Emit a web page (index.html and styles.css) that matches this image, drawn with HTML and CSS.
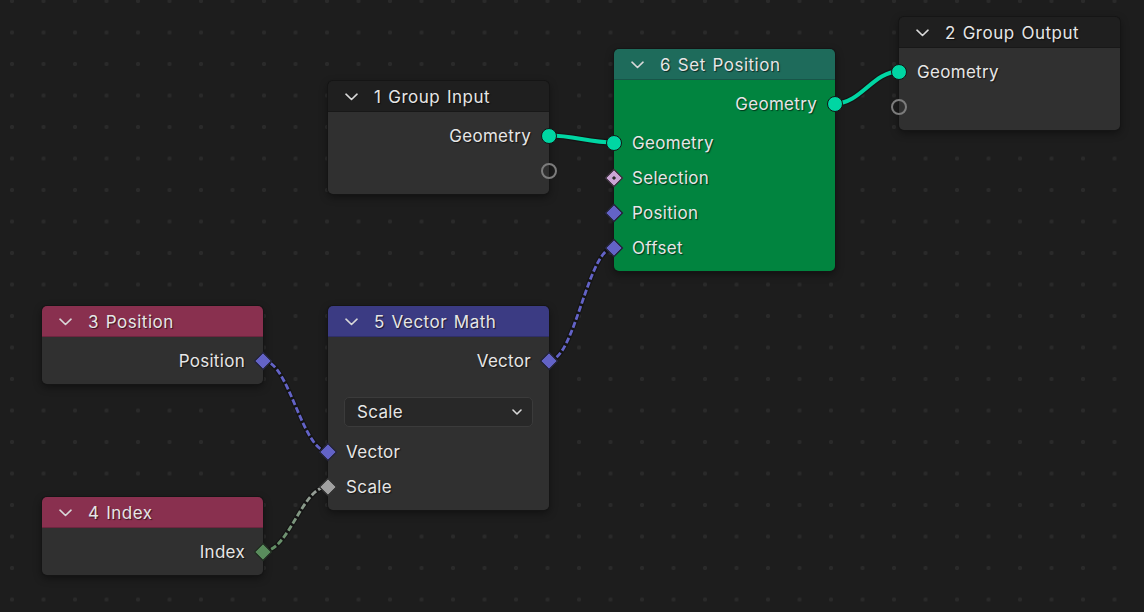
FILE: index.html
```html
<!DOCTYPE html>
<html lang="en">
<head>
    <meta charset="UTF-8">
    <title>Geometry Nodes</title>
    <link rel="stylesheet" href="styles.css">
</head>
<body>
    <div class="editor">
        <svg class="links" width="1144" height="612" viewBox="0 0 1144 612">
            <defs>
                <linearGradient id="intToFloat" gradientUnits="userSpaceOnUse" x1="263" y1="551.5" x2="328" y2="486.5">
                    <stop offset="0" stop-color="#5a8c5d"/>
                    <stop offset="1" stop-color="#a1a1a1"/>
                </linearGradient>
            </defs>
            <!-- geometry links -->
            <path class="link-outline" d="M549 135.5 C575 135.5 588 142.5 614 142.5"/>
            <path class="link-geo" d="M549 135.5 C575 135.5 588 142.5 614 142.5"/>
            <path class="link-outline" d="M835 103.5 C861 103.5 873 71.5 899 71.5"/>
            <path class="link-geo" d="M835 103.5 C861 103.5 873 71.5 899 71.5"/>
            <!-- field links -->
            <path class="link-outline thin" d="M549 360.5 C575 360.5 588 247.5 614 247.5"/>
            <path class="link-field vec" d="M549 360.5 C575 360.5 588 247.5 614 247.5"/>
            <path class="link-outline thin" d="M263 360.5 C289 360.5 302 451.5 328 451.5"/>
            <path class="link-field vec" d="M263 360.5 C289 360.5 302 451.5 328 451.5"/>
            <path class="link-outline thin" d="M263 551.5 C289 551.5 302 486.5 328 486.5"/>
            <path class="link-field grad" d="M263 551.5 C289 551.5 302 486.5 328 486.5"/>
        </svg>

        <div class="node group-input">
            <div class="node-header">
                <svg class="chevron" width="13" height="8" viewBox="0 0 13 8"><path d="M1 1.2 L6.5 6.5 L12 1.2"/></svg>
                <span>1 Group Input</span>
            </div>
            <div class="node-body">
                <div class="row out">Geometry<i class="socket geo"></i></div>
                <div class="row out"><i class="socket empty"></i></div>
            </div>
        </div>

        <div class="node set-position">
            <div class="node-header">
                <svg class="chevron" width="13" height="8" viewBox="0 0 13 8"><path d="M1 1.2 L6.5 6.5 L12 1.2"/></svg>
                <span>6 Set Position</span>
            </div>
            <div class="node-body">
                <div class="row out">Geometry<i class="socket geo"></i></div>
                <div class="inputs">
                    <div class="row in"><i class="socket geo"></i>Geometry</div>
                    <div class="row in"><i class="socket bool"></i>Selection</div>
                    <div class="row in"><i class="socket vec"></i>Position</div>
                    <div class="row in"><i class="socket vec"></i>Offset</div>
                </div>
            </div>
        </div>

        <div class="node group-output">
            <div class="node-header">
                <svg class="chevron" width="13" height="8" viewBox="0 0 13 8"><path d="M1 1.2 L6.5 6.5 L12 1.2"/></svg>
                <span>2 Group Output</span>
            </div>
            <div class="node-body">
                <div class="row in"><i class="socket geo"></i>Geometry</div>
                <div class="row in"><i class="socket empty"></i></div>
            </div>
        </div>

        <div class="node position">
            <div class="node-header">
                <svg class="chevron" width="13" height="8" viewBox="0 0 13 8"><path d="M1 1.2 L6.5 6.5 L12 1.2"/></svg>
                <span>3 Position</span>
            </div>
            <div class="node-body">
                <div class="row out">Position<i class="socket vec"></i></div>
            </div>
        </div>

        <div class="node vector-math">
            <div class="node-header">
                <svg class="chevron" width="13" height="8" viewBox="0 0 13 8"><path d="M1 1.2 L6.5 6.5 L12 1.2"/></svg>
                <span>5 Vector Math</span>
            </div>
            <div class="node-body">
                <div class="row out">Vector<i class="socket vec"></i></div>
                <div class="dropdown">
                    <span>Scale</span>
                    <svg class="drop-arrow" width="10" height="6" viewBox="0 0 10 6"><path d="M1 1 L5 5 L9 1"/></svg>
                </div>
                <div class="row in"><i class="socket vec"></i>Vector</div>
                <div class="row in"><i class="socket float"></i>Scale</div>
            </div>
        </div>

        <div class="node index">
            <div class="node-header">
                <svg class="chevron" width="13" height="8" viewBox="0 0 13 8"><path d="M1 1.2 L6.5 6.5 L12 1.2"/></svg>
                <span>4 Index</span>
            </div>
            <div class="node-body">
                <div class="row out">Index<i class="socket int"></i></div>
            </div>
        </div>
    </div>
</body>
</html>
```

FILE: styles.css
```css
body {
    margin: 0;
    background: #1d1d1d;
}
.editor {
    position: relative;
    width: 1144px;
    height: 612px;
    overflow: hidden;
    background-color: #1d1d1d;
    background-image: radial-gradient(circle, #2a2a2a 0, #2a2a2a 1.8px, transparent 2.4px);
    background-size: 31.5px 31.5px;
    background-position: -3.75px -14.75px;
    font-family: 'Inter', 'DejaVu Sans', sans-serif;
}
.links {
    position: absolute;
    left: 0;
    top: 0;
}
.links path {
    fill: none;
    stroke-linecap: round;
}
.link-outline {
    stroke: #141414;
    stroke-width: 6.5;
}
.link-outline.thin {
    stroke-width: 5;
}
.link-geo {
    stroke: #00d6a3;
    stroke-width: 4;
}
.link-field {
    stroke-width: 2.8;
    stroke-dasharray: 6 2.5;
    stroke-linecap: butt !important;
}
.link-field.vec {
    stroke: #6363c7;
}
.link-field.grad {
    stroke: url(#intToFloat);
}

/* nodes */
.node {
    position: absolute;
    width: 221px;
    border-radius: 5px;
    box-shadow: 0 0 0 1px #151515, 0 3px 8px rgba(0, 0, 0, 0.45);
    color: #e6e6e6;
    font-size: 17px;
    letter-spacing: 0.3px;
    text-shadow: 1px 1px 1px rgba(0, 0, 0, 0.6);
}
.node-header {
    height: 31px;
    display: flex;
    align-items: center;
    padding-left: 17px;
    border-radius: 5px 5px 0 0;
    background: #1f1f1f;
    box-shadow: inset 0 -1px 0 rgba(0, 0, 0, 0.2);
    letter-spacing: 0.5px;
    word-spacing: 1.5px;
}
.chevron {
    margin-right: 16px;
    flex: none;
}
.chevron path,
.drop-arrow path {
    fill: none;
    stroke: #d8d8d8;
    stroke-width: 1.6;
    stroke-linecap: round;
    stroke-linejoin: round;
}
.node-body {
    background: #303030;
    border-radius: 0 0 5px 5px;
    padding: 6px 0;
}
.row {
    position: relative;
    height: 35px;
    display: flex;
    align-items: center;
    padding: 0 18px;
}
.row.out {
    justify-content: flex-end;
}
.inputs {
    margin-top: 4px;
}

/* sockets */
.socket {
    position: absolute;
    top: 50%;
    box-sizing: border-box;
}
.row.out .socket {
    left: 100%;
}
.row.in .socket {
    left: 0;
}
.socket.geo {
    width: 16px;
    height: 16px;
    border-radius: 50%;
    background: #00d6a3;
    border: 1.5px solid #141414;
    transform: translate(-50%, -50%);
}
.socket.empty {
    width: 16px;
    height: 16px;
    border-radius: 50%;
    border: 2px solid #7c7c7c;
    transform: translate(-50%, -50%);
}
.socket.vec,
.socket.bool,
.socket.float,
.socket.int {
    width: 13px;
    height: 13px;
    border: 1.3px solid #141414;
    transform: translate(-50%, -50%) rotate(45deg);
}
.socket.vec {
    background: #6363c7;
}
.socket.float {
    background: #a1a1a1;
}
.socket.int {
    background: #598c5c;
}
.socket.bool {
    background: #cca6d6;
}
.socket.bool::after {
    content: "";
    position: absolute;
    left: 3.7px;
    top: 3.7px;
    width: 3px;
    height: 3px;
    background: #2a2a2a;
}

/* dropdown */
.dropdown {
    display: flex;
    align-items: center;
    justify-content: space-between;
    height: 30px;
    box-sizing: border-box;
    margin: 19px 16px 7px 16px;
    padding: 0 6px 0 12px;
    background: #282828;
    border: 1px solid #3b3b3b;
    border-radius: 5px;
}
.drop-arrow {
    margin-right: 4px;
}

/* node placement on the canvas */
.group-input { left: 328px; top: 81px; }
.set-position { left: 614px; top: 49px; }
.group-output { left: 899px; top: 17px; }
.position { left: 42px; top: 306px; }
.vector-math { left: 328px; top: 306px; }
.index { left: 42px; top: 497px; }

.set-position .node-header { background: #1e6b5b; }
.set-position .node-body { background: #01843f; }
.position .node-header,
.index .node-header { background: #89304f; }
.vector-math .node-header { background: #3b3b83; }
```
